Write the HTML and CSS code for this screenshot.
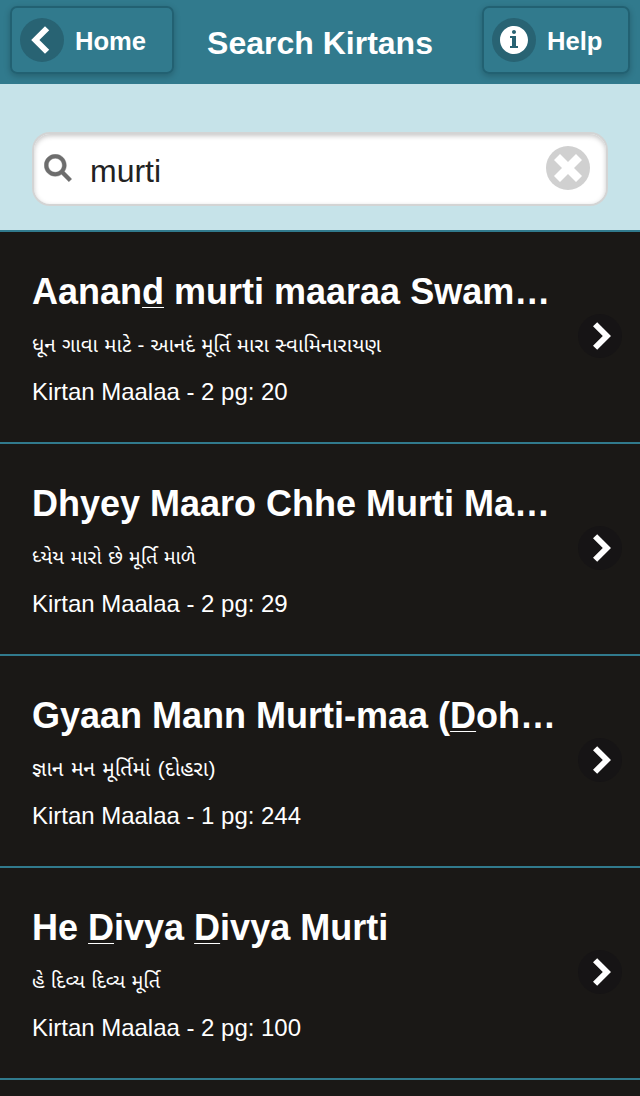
FILE: index.html
```html
<!DOCTYPE html>
<html lang="en">
<head>
<meta charset="utf-8">
<title>Search Kirtans</title>
<link rel="stylesheet" href="styles.css">
</head>
<body>
<header class="header">
  <a class="btn btn-home"><span class="disc"><svg class="icon" viewBox="0 0 28 28"><path d="M3.2 14 17 .2 21.2 4.2 11.4 14 21.2 23.8 17 27.8z"/></svg></span><span class="btn-label">Home</span></a>
  <h1 class="title">Search Kirtans</h1>
  <a class="btn btn-help"><span class="disc"><svg class="icon" viewBox="0 0 14 14"><path d="M7,0C3.134,0,0,3.134,0,7s3.134,7,7,7s7-3.134,7-7S10.866,0,7,0z M7,2c0.552,0,1,0.447,1,1S7.552,4,7,4S6,3.553,6,3S6.448,2,7,2z M9,11H5v-1h1V6H5V5h3v5h1V11z"/></svg></span><span class="btn-label">Help</span></a>
</header>
<div class="search">
  <div class="field">
    <svg class="icon glass" viewBox="0 0 14 14"><path d="M10.171,8.766c0.617-0.888,0.979-1.964,0.979-3.126c0-3.037-2.463-5.5-5.5-5.5s-5.5,2.463-5.5,5.5s2.463,5.5,5.5,5.5c1.152,0,2.223-0.355,3.104-0.962l3.684,3.683l1.414-1.414L10.171,8.766z M5.649,9.14c-1.933,0-3.5-1.567-3.5-3.5c0-1.933,1.567-3.5,3.5-3.5c1.933,0,3.5,1.567,3.5,3.5C9.149,7.572,7.582,9.14,5.649,9.14z"/></svg>
    <span class="query">murti</span>
    <span class="disc disc-clear"><svg class="icon" viewBox="0 0 14 14"><path d="M14 3 11 0 7 4 3 0 0 3 4 7 0 11 3 14 7 10 11 14 14 11 10 7z"/></svg></span>
  </div>
</div>
<ul class="list">
  <li class="item">
    <div class="text"><h2 class="name">Aanan<u>d</u> murti maaraa Swam…</h2><p class="guj guj-wide" lang="gu">ધૂન ગાવા માટે - આનદં મૂર્તિ મારા સ્વામિનારાયણ</p><p class="meta">Kirtan Maalaa - 2 pg: 20</p></div>
    <span class="disc disc-dark"><svg class="icon" viewBox="0 0 28 28"><path d="M25 14 11.2 .2 7 4.2 16.8 14 7 23.8 11.2 27.8z"/></svg></span>
  </li>
  <li class="item">
    <div class="text"><h2 class="name">Dhyey Maaro Chhe Murti Ma…</h2><p class="guj" lang="gu">ધ્યેય મારો છે મૂર્તિ માળે</p><p class="meta">Kirtan Maalaa - 2 pg: 29</p></div>
    <span class="disc disc-dark"><svg class="icon" viewBox="0 0 28 28"><path d="M25 14 11.2 .2 7 4.2 16.8 14 7 23.8 11.2 27.8z"/></svg></span>
  </li>
  <li class="item">
    <div class="text"><h2 class="name">Gyaan Mann Murti-maa (<u>D</u>oh…</h2><p class="guj guj-wider" lang="gu">જ્ઞાન મન મૂર્તિમાં (દોહરા)</p><p class="meta">Kirtan Maalaa - 1 pg: 244</p></div>
    <span class="disc disc-dark"><svg class="icon" viewBox="0 0 28 28"><path d="M25 14 11.2 .2 7 4.2 16.8 14 7 23.8 11.2 27.8z"/></svg></span>
  </li>
  <li class="item">
    <div class="text"><h2 class="name">He <u>D</u>ivya <u>D</u>ivya Murti</h2><p class="guj" lang="gu">હે દિવ્ય દિવ્ય મૂર્તિ</p><p class="meta">Kirtan Maalaa - 2 pg: 100</p></div>
    <span class="disc disc-dark"><svg class="icon" viewBox="0 0 28 28"><path d="M25 14 11.2 .2 7 4.2 16.8 14 7 23.8 11.2 27.8z"/></svg></span>
  </li>
</ul>
</body>
</html>
```
FILE: styles.css
```css
* { box-sizing: border-box; margin: 0; padding: 0; }
body {
  height: 1096px;
  overflow: hidden;
  background: #1a1816;
  color: #fff;
  font-family: "Liberation Sans", "Noto Sans Gujarati", "Noto Sans", sans-serif;
}
.header {
  display: grid;
  grid-template-columns: 1fr auto 1fr;
  height: 84px;
  padding: 6px 10px 10px;
  background: #317a8d;
}
.btn {
  display: flex;
  align-items: center;
  gap: 11px;
  height: 68px;
  padding-left: 8px;
  border: 2px solid #226172;
  border-radius: 7px;
  box-shadow: 0 2px 6px rgba(0, 0, 0, .22);
}
.btn-home { width: 164px; }
.btn-help { width: 148px; justify-self: end; }
.btn-label { font-size: 25.6px; font-weight: bold; line-height: 30px; padding-top: 2px; }
.title { font-size: 32px; line-height: 74px; white-space: nowrap; }
.disc {
  display: flex;
  flex: none;
  align-items: center;
  justify-content: center;
  width: 44px;
  height: 44px;
  border-radius: 50%;
  background: #286373;
}
.icon { display: block; width: 28px; height: 28px; fill: #fff; }
.search {
  height: 148px;
  padding: 48px 32px 24px;
  background: #c6e3e9;
  border-bottom: 2px solid #317a8d;
}
.field {
  display: flex;
  align-items: center;
  height: 74px;
  padding: 0 16px 2px 10px;
  border: 2px solid #d3d4d4;
  border-radius: 18px;
  background: #fff;
  box-shadow: inset 0 2px 5px rgba(0, 0, 0, .22);
}
.glass { fill: #6d6d6d; stroke: #6d6d6d; stroke-width: .2; }
.query { flex: 1; padding: 5px 0 0 18px; color: #222; font-size: 32px; line-height: 36px; }
.disc-clear { background: #d0d0d0; }
.disc-dark { background: #161415; }
.list { list-style: none; }
.item {
  display: flex;
  align-items: center;
  justify-content: space-between;
  height: 212px;
  padding: 0 18px 0 32px;
  border-bottom: 2px solid #317a8d;
}
.item .disc { margin-bottom: 2px; }
.text { align-self: flex-start; padding-top: 36px; white-space: nowrap; }
.name { font-size: 36px; line-height: 48px; }
.name u { text-decoration-thickness: 1px; text-underline-offset: 3px; text-decoration-skip-ink: none; }
.guj { height: 52px; font-size: 20px; line-height: 58px; word-spacing: .6px; }
.guj-wide { font-size: 20.5px; }
.guj-wider { font-size: 21px; word-spacing: 1.6px; }
.meta { font-size: 24px; line-height: 48px; letter-spacing: -.02px; }
```
